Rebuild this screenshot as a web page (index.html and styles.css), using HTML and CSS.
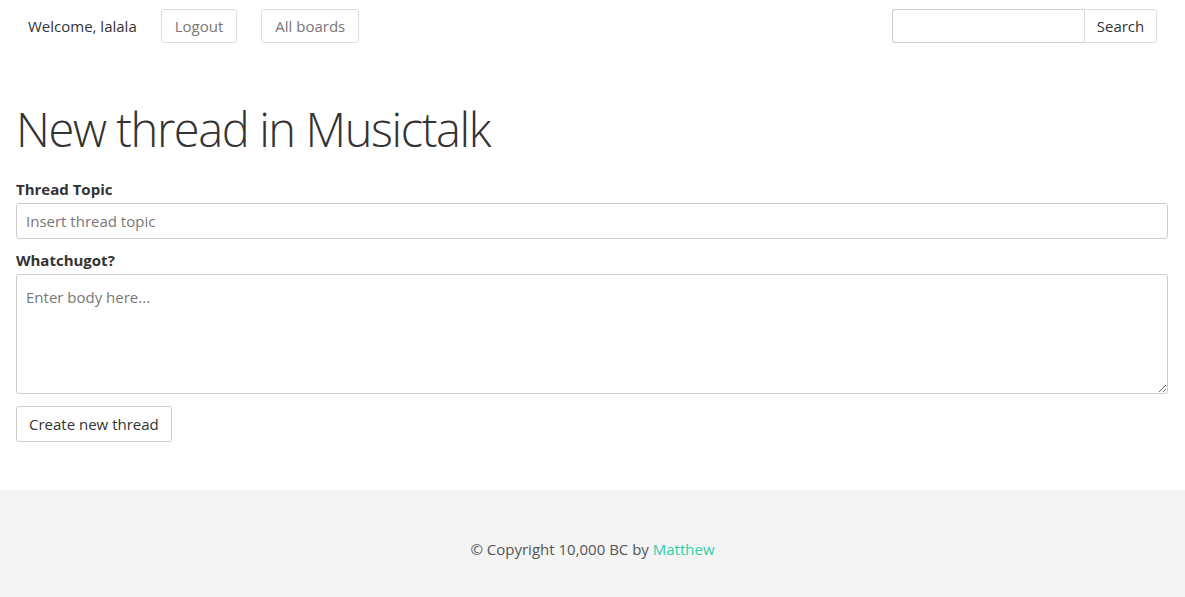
FILE: index.html
```html
<!DOCTYPE html>
<html>
<head>
<meta charset="utf-8">
<link rel="stylesheet" href="styles.css">
</head>
<body>
<nav class="navbar">
  <div class="nav-left">
    <span class="welcome">Welcome, lalala</span>
    <button class="btn btn-nav">Logout</button>
    <button class="btn btn-nav">All boards</button>
  </div>
  <form class="search">
    <input class="search-input" type="text">
    <button class="btn search-btn" type="button">Search</button>
  </form>
</nav>
<main class="content">
  <h1 class="title">New thread in Musictalk</h1>
  <form class="thread-form">
    <label class="label">Thread Topic</label>
    <input class="field" type="text" placeholder="Insert thread topic">
    <label class="label label-body">Whatchugot?</label>
    <textarea class="field area" placeholder="Enter body here..."></textarea>
    <button class="btn btn-create" type="button">Create new thread</button>
  </form>
</main>
<footer class="footer">
  <p>© Copyright 10,000 BC by <a href="#" class="author">Matthew</a></p>
</footer>
</body>
</html>
```
FILE: styles.css
```css
* { box-sizing: border-box; }
html, body { margin: 0; padding: 0; }
body {
  font-family: "Open Sans", "Noto Sans", sans-serif;
  font-size: 15px;
  color: #333;
  background: #fff;
  width: 1185px;
  height: 597px;
  overflow: hidden;
  display: flex;
  flex-direction: column;
}
.navbar {
  display: flex;
  justify-content: space-between;
  align-items: center;
  padding: 9px 28px 0 28px;
  height: 43px;
}
.nav-left { display: flex; align-items: center; }
.welcome { color: #333; margin-right: 24px; }
.btn {
  font-family: inherit;
  font-size: 15px;
  background: #fff;
  border: 1px solid #ccc;
  border-radius: 3px;
  height: 34px;
  padding: 0 12px;
  color: #333;
  cursor: pointer;
}
.btn-nav { color: #777; border-color: #ddd; margin-right: 24px; padding: 0 13px; }
.search { display: flex; margin: 0; }
.search-input {
  width: 192px;
  height: 34px;
  border: 1px solid #ccc;
  border-right: none;
  border-radius: 3px 0 0 3px;
  outline: none;
}
.search-btn { border-radius: 0 3px 3px 0; width: 73px; padding: 0; border-color: #ddd; }
.content { padding: 0 17px 0 16px; flex: 0 0 auto; height: 447px; }
.title {
  font-weight: 300;
  font-size: 47px;
  margin: 56px 0 20px 0;
  line-height: 60px;
  color: #333;
  letter-spacing: -1.4px;
}
.thread-form { display: flex; flex-direction: column; align-items: flex-start; }
.label { font-weight: 700; font-size: 15px; line-height: 20px; margin-bottom: 4px; }
.label-body { margin-top: 11px; }
.field {
  width: 100%;
  height: 36px;
  border: 1px solid #ccc;
  border-radius: 3px;
  padding: 6px 9px;
  font-family: inherit;
  font-size: 15px;
  color: #555;
  outline: none;
}
.field::placeholder { color: #777; }
.area { height: 120px; resize: vertical; padding-top: 12px; }
.btn-create { margin-top: 12px; height: 36px; padding: 0 12px; }
.footer {
  flex: 1;
  background: #f4f4f4;
  display: flex;
  justify-content: center;
  align-items: center;
  padding-top: 10px;
}
.footer p { margin: 0; color: #555; font-size: 15px; }
.author { color: #2fcfa8; text-decoration: none; }
```
